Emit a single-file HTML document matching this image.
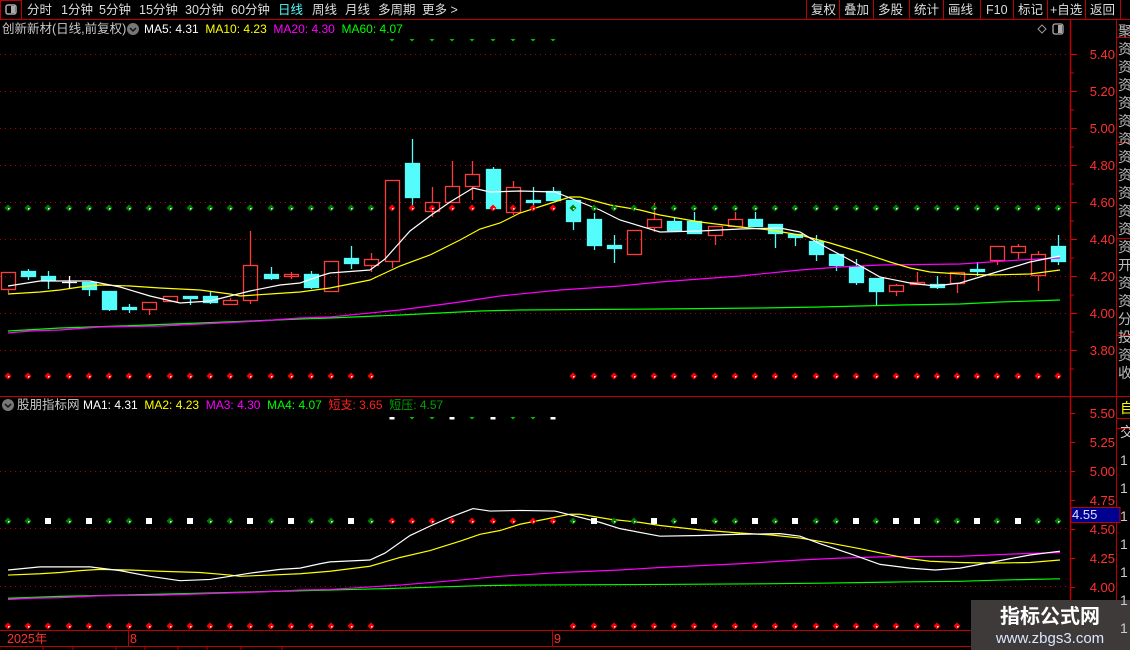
<!DOCTYPE html>
<html><head><meta charset="utf-8">
<style>
html,body{margin:0;padding:0;background:#000;width:1130px;height:650px;overflow:hidden}
body{position:relative;font-family:"Liberation Sans","Noto Sans CJK SC",sans-serif}
.t{position:absolute;white-space:nowrap;font-size:12.5px;line-height:14px}
</style></head><body>
<svg width="1130" height="650" style="position:absolute;left:0;top:0" xmlns="http://www.w3.org/2000/svg">
<defs>
<g id="dg"><path d="M0,-3.5 L3.5,0 L0,3.5 L-3.5,0Z" fill="#008000"/><rect x="0" y="0" width="1.5" height="1.5" fill="#fff"/></g>
<g id="dr"><path d="M0,-3.5 L3.5,0 L0,3.5 L-3.5,0Z" fill="#ff0000"/><rect x="0" y="0" width="1.5" height="1.5" fill="#fff"/></g>
<g id="dw"><rect x="-3" y="-3" width="6" height="6" fill="#fff"/></g>
<g id="tg"><path d="M-2.5,-1 L2.5,-1 L0,1.5Z" fill="#00c000"/></g>
<g id="tw"><rect x="-2.5" y="-1" width="5" height="2.5" fill="#fff"/></g>
<g id="mas" fill="none" stroke-width="1.2">
<polyline vector-effect="non-scaling-stroke" stroke="#00ff00" points="8,331 60,328 120,326 200,323 300,319 330,318 400,315 480,311 520,310 660,309 760,308 820,307 900,305 960,304 1000,302 1060,300"/>
<polyline vector-effect="non-scaling-stroke" stroke="#ff00ff" points="8,333 30,331 60,330 100,327 160,326 200,324 260,321 300,318 330,317 400,310 460,302 500,296 560,290 620,286 660,282 700,279 740,276 800,270 840,267 880,265 960,264 1020,260 1060,258"/>
<polyline vector-effect="non-scaling-stroke" stroke="#ffff00" points="8,294 40,292 60,290 80,287 100,285 130,286 160,288 200,290 230,294 240,296 270,294 300,292 330,288 370,280 400,266 430,255 460,240 480,229 500,223 520,213 545,205 570,197 580,197 610,205 640,210 660,215 700,222 740,227 770,230 800,235 830,243 860,252 890,262 910,268 930,272 960,274 990,275 1030,274 1060,270"/>
<polyline vector-effect="non-scaling-stroke" stroke="#ffffff" points="8,286 40,281 90,281 120,287 150,296 180,303 210,301 230,296 250,291 280,285 300,283 320,276 330,273 370,270 385,259 410,231 430,216 450,202 473,188 490,192 520,191 555,192 575,200 600,210 620,220 660,232 700,231 740,229 780,228 800,232 820,244 850,260 880,277 910,283 935,286 960,283 1000,271 1030,262 1060,256"/>
</g>
</defs>

<!-- frame lines -->
<line x1="0" y1="19.5" x2="1130" y2="19.5" stroke="#c00000"/>
<rect x="0.5" y="0.5" width="21" height="19" fill="none" stroke="#c00000"/>
<rect x="6" y="5" width="10" height="9" rx="2" fill="none" stroke="#aaa" stroke-width="1.5"/><rect x="11" y="6" width="4" height="7" fill="#aaa"/>
<g stroke="#c00000"><line x1="806.5" y1="0" x2="806.5" y2="19"/><line x1="839.5" y1="0" x2="839.5" y2="19"/><line x1="873.5" y1="0" x2="873.5" y2="19"/><line x1="909.5" y1="0" x2="909.5" y2="19"/><line x1="943.5" y1="0" x2="943.5" y2="19"/><line x1="980.5" y1="0" x2="980.5" y2="19"/><line x1="1013.5" y1="0" x2="1013.5" y2="19"/><line x1="1047.5" y1="0" x2="1047.5" y2="19"/><line x1="1085.5" y1="0" x2="1085.5" y2="19"/><line x1="1120.5" y1="0" x2="1120.5" y2="19"/></g>
<line x1="1070.5" y1="20" x2="1070.5" y2="630" stroke="#c00000" stroke-width="1.5"/>
<line x1="1116.5" y1="20" x2="1116.5" y2="630" stroke="#c00000"/>
<line x1="0" y1="396.5" x2="1130" y2="396.5" stroke="#c00000"/>
<line x1="0" y1="630.5" x2="1130" y2="630.5" stroke="#c00000"/>
<line x1="0" y1="646.5" x2="1130" y2="646.5" stroke="#c00000"/>
<line x1="128.5" y1="631" x2="128.5" y2="646" stroke="#c00000"/>
<line x1="552.5" y1="631" x2="552.5" y2="646" stroke="#c00000"/>
<g stroke="#c00000"><line x1="43" y1="647" x2="43" y2="650"/><line x1="73" y1="647" x2="73" y2="650"/><line x1="116" y1="647" x2="116" y2="650"/><line x1="145" y1="647" x2="145" y2="650"/><line x1="178" y1="647" x2="178" y2="650"/><line x1="207" y1="647" x2="207" y2="650"/><line x1="241" y1="647" x2="241" y2="650"/><line x1="282" y1="647" x2="282" y2="650"/></g>
<g stroke="#c00000"><line x1="1117" y1="37.5" x2="1130" y2="37.5"/><line x1="1117" y1="142.5" x2="1130" y2="142.5"/><line x1="1117" y1="238.5" x2="1130" y2="238.5"/><line x1="1117" y1="335.5" x2="1130" y2="335.5"/><line x1="1117" y1="418.5" x2="1130" y2="418.5"/><line x1="1117" y1="428.5" x2="1130" y2="428.5"/></g>

<!-- gridlines -->
<g stroke="#b00000" stroke-dasharray="1,4">
<line x1="0" y1="54.5" x2="1068" y2="54.5"/><line x1="0" y1="91.5" x2="1068" y2="91.5"/><line x1="0" y1="128.5" x2="1068" y2="128.5"/><line x1="0" y1="165.5" x2="1068" y2="165.5"/><line x1="0" y1="202.5" x2="1068" y2="202.5"/><line x1="0" y1="239.5" x2="1068" y2="239.5"/><line x1="0" y1="276.5" x2="1068" y2="276.5"/><line x1="0" y1="313.5" x2="1068" y2="313.5"/><line x1="0" y1="350.5" x2="1068" y2="350.5"/>
<line x1="0" y1="471.5" x2="1068" y2="471.5"/><line x1="0" y1="528.5" x2="1068" y2="528.5"/><line x1="0" y1="586.5" x2="1068" y2="586.5"/>
</g>
<!-- axis ticks -->
<g stroke="#e00000">
<line x1="1071" y1="54.5" x2="1077" y2="54.5"/><line x1="1071" y1="73" x2="1074" y2="73"/><line x1="1071" y1="91.5" x2="1077" y2="91.5"/><line x1="1071" y1="110" x2="1074" y2="110"/><line x1="1071" y1="128.5" x2="1077" y2="128.5"/><line x1="1071" y1="147" x2="1074" y2="147"/><line x1="1071" y1="165.5" x2="1077" y2="165.5"/><line x1="1071" y1="184" x2="1074" y2="184"/><line x1="1071" y1="202.5" x2="1077" y2="202.5"/><line x1="1071" y1="221" x2="1074" y2="221"/><line x1="1071" y1="239.5" x2="1077" y2="239.5"/><line x1="1071" y1="258" x2="1074" y2="258"/><line x1="1071" y1="276.5" x2="1077" y2="276.5"/><line x1="1071" y1="295" x2="1074" y2="295"/><line x1="1071" y1="313.5" x2="1077" y2="313.5"/><line x1="1071" y1="332" x2="1074" y2="332"/><line x1="1071" y1="350.5" x2="1077" y2="350.5"/><line x1="1071" y1="369" x2="1074" y2="369"/>
<line x1="1071" y1="413.5" x2="1075" y2="413.5"/><line x1="1071" y1="442.5" x2="1075" y2="442.5"/><line x1="1071" y1="471.5" x2="1075" y2="471.5"/><line x1="1071" y1="500.5" x2="1075" y2="500.5"/><line x1="1071" y1="529.5" x2="1075" y2="529.5"/><line x1="1071" y1="558.5" x2="1075" y2="558.5"/><line x1="1071" y1="587.5" x2="1075" y2="587.5"/>
</g>
<g fill="#ff3030" font-family="Liberation Sans" font-size="13" text-anchor="end">
<text x="1115" y="59">5.40</text><text x="1115" y="96">5.20</text><text x="1115" y="133">5.00</text><text x="1115" y="170">4.80</text><text x="1115" y="207">4.60</text><text x="1115" y="244">4.40</text><text x="1115" y="281">4.20</text><text x="1115" y="318">4.00</text><text x="1115" y="355">3.80</text>
<text x="1115" y="418">5.50</text><text x="1115" y="447">5.25</text><text x="1115" y="476">5.00</text><text x="1115" y="505">4.75</text><text x="1115" y="534">4.50</text><text x="1115" y="563">4.25</text><text x="1115" y="592">4.00</text>
</g>
<rect x="1071" y="507.5" width="49" height="15" fill="#000090" stroke="#c00000"/>
<text x="1072" y="519" fill="#e0e0ff" font-family="Liberation Sans" font-size="13">4.55</text>

<!-- candles -->
<g id="candles" stroke-width="1.3">
<g stroke="#ff3c3c" fill="none">
<rect x="1.5" y="272.5" width="14" height="17"/><line x1="8.5" y1="289" x2="8.5" y2="293"/>
<rect x="142.5" y="302.5" width="14" height="7"/><line x1="149.5" y1="309" x2="149.5" y2="315"/>
<rect x="163.5" y="296.5" width="14" height="5"/>
<rect x="223.5" y="300.5" width="14" height="4"/><line x1="230.5" y1="298" x2="230.5" y2="300"/>
<rect x="243.5" y="265.5" width="14" height="35"/><line x1="250.5" y1="231" x2="250.5" y2="265"/><line x1="250.5" y1="300" x2="250.5" y2="304"/>
<rect x="284.5" y="274.5" width="14" height="2"/><line x1="291.5" y1="272" x2="291.5" y2="279"/>
<rect x="324.5" y="261.5" width="14" height="30"/>
<rect x="364.5" y="259.5" width="14" height="6"/><line x1="371.5" y1="253" x2="371.5" y2="259"/><line x1="371.5" y1="265" x2="371.5" y2="272"/>
<rect x="385.5" y="180.5" width="14" height="81"/><line x1="392.5" y1="261" x2="392.5" y2="268"/>
<rect x="425.5" y="202.5" width="14" height="9"/><line x1="432.5" y1="187" x2="432.5" y2="202"/><line x1="432.5" y1="211" x2="432.5" y2="217"/>
<rect x="445.5" y="186.5" width="14" height="16"/><line x1="452.5" y1="161" x2="452.5" y2="186"/>
<rect x="465.5" y="174.5" width="14" height="12"/><line x1="472.5" y1="161" x2="472.5" y2="174"/><line x1="472.5" y1="186" x2="472.5" y2="200"/>
<rect x="506.5" y="187.5" width="14" height="25"/><line x1="513.5" y1="181" x2="513.5" y2="187"/><line x1="513.5" y1="212" x2="513.5" y2="215"/>
<rect x="627.5" y="230.5" width="14" height="24"/>
<rect x="647.5" y="219.5" width="14" height="8"/><line x1="654.5" y1="203" x2="654.5" y2="219"/><line x1="654.5" y1="227" x2="654.5" y2="232"/>
<rect x="708.5" y="226.5" width="14" height="9"/><line x1="715.5" y1="235" x2="715.5" y2="245"/>
<rect x="728.5" y="219.5" width="14" height="7"/><line x1="735.5" y1="212" x2="735.5" y2="219"/>
<rect x="889.5" y="285.5" width="14" height="6"/><line x1="896.5" y1="284" x2="896.5" y2="285"/><line x1="896.5" y1="291" x2="896.5" y2="296"/>
<rect x="910.5" y="282.5" width="14" height="2"/><line x1="917.5" y1="272" x2="917.5" y2="282"/>
<rect x="950.5" y="272.5" width="14" height="11"/><line x1="957.5" y1="283" x2="957.5" y2="293"/>
<rect x="990.5" y="246.5" width="14" height="14"/><line x1="997.5" y1="260" x2="997.5" y2="265"/>
<rect x="1011.5" y="246.5" width="14" height="6"/><line x1="1018.5" y1="244" x2="1018.5" y2="246"/><line x1="1018.5" y1="252" x2="1018.5" y2="259"/>
<rect x="1031.5" y="254.5" width="14" height="21"/><line x1="1038.5" y1="251" x2="1038.5" y2="254"/><line x1="1038.5" y1="275" x2="1038.5" y2="291"/>
</g>
<g stroke="#54fcfc" fill="#54fcfc">
<line x1="28.5" y1="269" x2="28.5" y2="280"/><rect x="21.5" y="271.5" width="14" height="5"/>
<line x1="48.5" y1="271" x2="48.5" y2="289"/><rect x="41.5" y="276.5" width="14" height="4"/>
<line x1="89.5" y1="282" x2="89.5" y2="296"/><rect x="82.5" y="282.5" width="14" height="7"/>
<line x1="109.5" y1="291" x2="109.5" y2="311"/><rect x="102.5" y="291.5" width="14" height="18"/>
<line x1="129.5" y1="304" x2="129.5" y2="313"/><rect x="122.5" y="307.5" width="14" height="2"/>
<line x1="190.5" y1="296" x2="190.5" y2="305"/><rect x="183.5" y="296.5" width="14" height="2"/>
<line x1="210.5" y1="291" x2="210.5" y2="304"/><rect x="203.5" y="296.5" width="14" height="6"/>
<line x1="271.5" y1="267" x2="271.5" y2="280"/><rect x="264.5" y="274.5" width="14" height="4"/>
<line x1="311.5" y1="271" x2="311.5" y2="289"/><rect x="304.5" y="274.5" width="14" height="13"/>
<line x1="351.5" y1="246" x2="351.5" y2="269"/><rect x="344.5" y="258.5" width="14" height="5"/>
<line x1="412.5" y1="139" x2="412.5" y2="206"/><rect x="405.5" y="163.5" width="14" height="34"/>
<line x1="493.5" y1="167" x2="493.5" y2="208"/><rect x="486.5" y="169.5" width="14" height="39"/>
<line x1="533.5" y1="187" x2="533.5" y2="210"/><rect x="526.5" y="200.5" width="14" height="2"/>
<line x1="553.5" y1="187" x2="553.5" y2="200"/><rect x="546.5" y="191.5" width="14" height="9"/>
<line x1="573.5" y1="200" x2="573.5" y2="230"/><rect x="566.5" y="200.5" width="14" height="21"/>
<line x1="594.5" y1="213" x2="594.5" y2="250"/><rect x="587.5" y="219.5" width="14" height="26"/>
<line x1="614.5" y1="235" x2="614.5" y2="263"/><rect x="607.5" y="245.5" width="14" height="3"/>
<line x1="674.5" y1="217" x2="674.5" y2="230"/><rect x="667.5" y="221.5" width="14" height="9"/>
<line x1="694.5" y1="212" x2="694.5" y2="233"/><rect x="687.5" y="221.5" width="14" height="12"/>
<line x1="755.5" y1="212" x2="755.5" y2="226"/><rect x="748.5" y="219.5" width="14" height="7"/>
<line x1="775.5" y1="224" x2="775.5" y2="248"/><rect x="768.5" y="224.5" width="14" height="9"/>
<line x1="795.5" y1="234" x2="795.5" y2="246"/><rect x="788.5" y="234.5" width="14" height="3"/>
<line x1="816.5" y1="235" x2="816.5" y2="261"/><rect x="809.5" y="241.5" width="14" height="13"/>
<line x1="836.5" y1="254" x2="836.5" y2="271"/><rect x="829.5" y="254.5" width="14" height="11"/>
<line x1="856.5" y1="259" x2="856.5" y2="285"/><rect x="849.5" y="266.5" width="14" height="16"/>
<line x1="876.5" y1="278" x2="876.5" y2="306"/><rect x="869.5" y="278.5" width="14" height="13"/>
<line x1="937.5" y1="276" x2="937.5" y2="289"/><rect x="930.5" y="284.5" width="14" height="3"/>
<line x1="977.5" y1="262" x2="977.5" y2="276"/><rect x="970.5" y="269.5" width="14" height="2"/>
<line x1="1058.5" y1="235" x2="1058.5" y2="265"/><rect x="1051.5" y="246.5" width="14" height="15"/>
</g>
<g stroke="#ffffff"><line x1="62" y1="282.5" x2="77" y2="282.5"/><line x1="69.5" y1="276" x2="69.5" y2="289"/></g>
</g>

<use href="#mas"/>
<g transform="matrix(1,0,0,0.627,0,390.7)"><use href="#mas"/></g>

<!-- dots main -->
<g>
<use href="#dg" x="8" y="208"/><use href="#dg" x="28" y="208"/><use href="#dg" x="48" y="208"/><use href="#dg" x="69" y="208"/><use href="#dg" x="89" y="208"/><use href="#dg" x="109" y="208"/><use href="#dg" x="129" y="208"/><use href="#dg" x="149" y="208"/><use href="#dg" x="170" y="208"/><use href="#dg" x="190" y="208"/><use href="#dg" x="210" y="208"/><use href="#dg" x="230" y="208"/><use href="#dg" x="250" y="208"/><use href="#dg" x="271" y="208"/><use href="#dg" x="291" y="208"/><use href="#dg" x="311" y="208"/><use href="#dg" x="331" y="208"/><use href="#dg" x="351" y="208"/><use href="#dg" x="371" y="208"/>
<use href="#dr" x="392" y="208"/><use href="#dr" x="412" y="208"/><use href="#dr" x="432" y="208"/><use href="#dr" x="452" y="208"/><use href="#dr" x="472" y="208"/><use href="#dr" x="493" y="208"/><use href="#dr" x="513" y="208"/><use href="#dr" x="533" y="208"/><use href="#dr" x="553" y="208"/>
<use href="#dg" x="573" y="208"/><use href="#dg" x="594" y="208"/><use href="#dg" x="614" y="208"/><use href="#dg" x="634" y="208"/><use href="#dg" x="654" y="208"/><use href="#dg" x="674" y="208"/><use href="#dg" x="694" y="208"/><use href="#dg" x="715" y="208"/><use href="#dg" x="735" y="208"/><use href="#dg" x="755" y="208"/><use href="#dg" x="775" y="208"/><use href="#dg" x="795" y="208"/><use href="#dg" x="816" y="208"/><use href="#dg" x="836" y="208"/><use href="#dg" x="856" y="208"/><use href="#dg" x="876" y="208"/><use href="#dg" x="896" y="208"/><use href="#dg" x="917" y="208"/><use href="#dg" x="937" y="208"/><use href="#dg" x="957" y="208"/><use href="#dg" x="977" y="208"/><use href="#dg" x="997" y="208"/><use href="#dg" x="1018" y="208"/><use href="#dg" x="1038" y="208"/><use href="#dg" x="1058" y="208"/>
</g>
<g>
<use href="#tg" x="392" y="40"/><use href="#tg" x="412" y="40"/><use href="#tg" x="432" y="40"/><use href="#tg" x="452" y="40"/><use href="#tg" x="472" y="40"/><use href="#tg" x="493" y="40"/><use href="#tg" x="513" y="40"/><use href="#tg" x="533" y="40"/><use href="#tg" x="553" y="40"/>
<use href="#tw" x="392" y="418"/><use href="#tg" x="412" y="418"/><use href="#tg" x="432" y="418"/><use href="#tw" x="452" y="418"/><use href="#tg" x="472" y="418"/><use href="#tw" x="493" y="418"/><use href="#tg" x="513" y="418"/><use href="#tg" x="533" y="418"/><use href="#tw" x="553" y="418"/>
</g>
<g id="redrow">
<use href="#dr" x="8" y="376"/><use href="#dr" x="28" y="376"/><use href="#dr" x="48" y="376"/><use href="#dr" x="69" y="376"/><use href="#dr" x="89" y="376"/><use href="#dr" x="109" y="376"/><use href="#dr" x="129" y="376"/><use href="#dr" x="149" y="376"/><use href="#dr" x="170" y="376"/><use href="#dr" x="190" y="376"/><use href="#dr" x="210" y="376"/><use href="#dr" x="230" y="376"/><use href="#dr" x="250" y="376"/><use href="#dr" x="271" y="376"/><use href="#dr" x="291" y="376"/><use href="#dr" x="311" y="376"/><use href="#dr" x="331" y="376"/><use href="#dr" x="351" y="376"/><use href="#dr" x="371" y="376"/>
<use href="#dr" x="573" y="376"/><use href="#dr" x="594" y="376"/><use href="#dr" x="614" y="376"/><use href="#dr" x="634" y="376"/><use href="#dr" x="654" y="376"/><use href="#dr" x="674" y="376"/><use href="#dr" x="694" y="376"/><use href="#dr" x="715" y="376"/><use href="#dr" x="735" y="376"/><use href="#dr" x="755" y="376"/><use href="#dr" x="775" y="376"/><use href="#dr" x="795" y="376"/><use href="#dr" x="816" y="376"/><use href="#dr" x="836" y="376"/><use href="#dr" x="856" y="376"/><use href="#dr" x="876" y="376"/><use href="#dr" x="896" y="376"/><use href="#dr" x="917" y="376"/><use href="#dr" x="937" y="376"/><use href="#dr" x="957" y="376"/><use href="#dr" x="977" y="376"/><use href="#dr" x="997" y="376"/><use href="#dr" x="1018" y="376"/><use href="#dr" x="1038" y="376"/><use href="#dr" x="1058" y="376"/>
</g>
<use href="#redrow" y="250"/>
<!-- lower row -->
<g>
<use href="#dg" x="8" y="521"/><use href="#dg" x="28" y="521"/><use href="#dw" x="48" y="521"/><use href="#dg" x="69" y="521"/><use href="#dw" x="89" y="521"/><use href="#dg" x="109" y="521"/><use href="#dg" x="129" y="521"/><use href="#dw" x="149" y="521"/><use href="#dg" x="170" y="521"/><use href="#dw" x="190" y="521"/><use href="#dg" x="210" y="521"/><use href="#dg" x="230" y="521"/><use href="#dw" x="250" y="521"/><use href="#dg" x="271" y="521"/><use href="#dw" x="291" y="521"/><use href="#dg" x="311" y="521"/><use href="#dg" x="331" y="521"/><use href="#dw" x="351" y="521"/><use href="#dg" x="371" y="521"/>
<use href="#dr" x="392" y="521"/><use href="#dr" x="412" y="521"/><use href="#dr" x="432" y="521"/><use href="#dr" x="452" y="521"/><use href="#dr" x="472" y="521"/><use href="#dr" x="493" y="521"/><use href="#dr" x="513" y="521"/><use href="#dr" x="533" y="521"/><use href="#dr" x="553" y="521"/>
<use href="#dg" x="573" y="521"/><use href="#dw" x="594" y="521"/><use href="#dg" x="614" y="521"/><use href="#dg" x="634" y="521"/><use href="#dw" x="654" y="521"/><use href="#dg" x="674" y="521"/><use href="#dw" x="694" y="521"/><use href="#dg" x="715" y="521"/><use href="#dg" x="735" y="521"/><use href="#dw" x="755" y="521"/><use href="#dg" x="775" y="521"/><use href="#dw" x="795" y="521"/><use href="#dg" x="816" y="521"/><use href="#dg" x="836" y="521"/><use href="#dw" x="856" y="521"/><use href="#dg" x="876" y="521"/><use href="#dw" x="896" y="521"/><use href="#dw" x="917" y="521"/><use href="#dg" x="937" y="521"/><use href="#dg" x="957" y="521"/><use href="#dw" x="977" y="521"/><use href="#dg" x="997" y="521"/><use href="#dw" x="1018" y="521"/><use href="#dg" x="1038" y="521"/><use href="#dg" x="1058" y="521"/>
</g>

<!-- icons -->
<circle cx="133" cy="29" r="6" fill="#777"/><path d="M130,28 L133,31 L136,28" stroke="#111" stroke-width="1.5" fill="none"/>
<circle cx="8" cy="405" r="6" fill="#777"/><path d="M5,404 L8,407 L11,404" stroke="#111" stroke-width="1.5" fill="none"/>
<path d="M1042,25 L1046,29 L1042,33 L1038,29Z" fill="none" stroke="#999"/>
<rect x="1053" y="24" width="10" height="10" rx="2" fill="none" stroke="#aaa" stroke-width="1.3"/><rect x="1058" y="25" width="4" height="8" fill="#aaa"/>

<!-- watermark -->
<rect x="971" y="600" width="159" height="50" fill="#3e3a3a"/>
<text x="1050" y="623" fill="#ffffff" font-family="Liberation Sans,Noto Sans CJK SC,sans-serif" font-size="20" font-weight="bold" text-anchor="middle">指标公式网</text>
<text x="1050" y="643" fill="#dce6ff" font-family="Liberation Sans,sans-serif" font-size="15" text-anchor="middle">www.zbgs3.com</text>
</svg>

<!-- toolbar text -->
<div class="t" style="left:27px;top:3px;color:#ddd">分时</div>
<div class="t" style="left:61px;top:3px;color:#ddd">1分钟</div>
<div class="t" style="left:99px;top:3px;color:#ddd">5分钟</div>
<div class="t" style="left:139px;top:3px;color:#ddd">15分钟</div>
<div class="t" style="left:185px;top:3px;color:#ddd">30分钟</div>
<div class="t" style="left:231px;top:3px;color:#ddd">60分钟</div>
<div class="t" style="left:278px;top:3px;color:#54fcfc">日线</div>
<div class="t" style="left:312px;top:3px;color:#ddd">周线</div>
<div class="t" style="left:345px;top:3px;color:#ddd">月线</div>
<div class="t" style="left:378px;top:3px;color:#ddd">多周期</div>
<div class="t" style="left:422px;top:3px;color:#ddd">更多 &gt;</div>
<div class="t" style="left:811px;top:3px;color:#ddd">复权</div>
<div class="t" style="left:844px;top:3px;color:#ddd">叠加</div>
<div class="t" style="left:878px;top:3px;color:#ddd">多股</div>
<div class="t" style="left:914px;top:3px;color:#ddd">统计</div>
<div class="t" style="left:948px;top:3px;color:#ddd">画线</div>
<div class="t" style="left:986px;top:3px;color:#ddd">F10</div>
<div class="t" style="left:1018px;top:3px;color:#ddd">标记</div>
<div class="t" style="left:1050px;top:3px;color:#ddd">+自选</div>
<div class="t" style="left:1090px;top:3px;color:#ddd">返回</div>

<div class="t" style="left:2px;top:22px;color:#c8c8c8">创新新材(日线,前复权)</div>
<div class="t" style="left:144px;top:22px;font-size:12px"><span style="color:#fff">MA5: 4.31</span>&nbsp;&nbsp;<span style="color:#ffff00">MA10: 4.23</span>&nbsp;&nbsp;<span style="color:#ff00ff">MA20: 4.30</span>&nbsp;&nbsp;<span style="color:#00ff00">MA60: 4.07</span></div>

<div class="t" style="left:17px;top:398px;color:#c8c8c8">股朋指标网</div>
<div class="t" style="left:83px;top:398px;font-size:12px"><span style="color:#fff">MA1: 4.31</span>&nbsp;&nbsp;<span style="color:#ffff00">MA2: 4.23</span>&nbsp;&nbsp;<span style="color:#ff00ff">MA3: 4.30</span>&nbsp;&nbsp;<span style="color:#00ff00">MA4: 4.07</span>&nbsp;&nbsp;<span style="color:#ff2020">短支: 3.65</span>&nbsp;&nbsp;<span style="color:#00a000">短压: 4.57</span></div>

<div class="t" style="left:7px;top:632px;color:#ff3030">2025年</div>
<div class="t" style="left:130px;top:632px;color:#ff3030">8</div>
<div class="t" style="left:554px;top:632px;color:#ff3030">9</div>

<div style="position:absolute;left:1118px;top:22px;width:12px;overflow:hidden;color:#bbb;font-size:14px;line-height:18px;font-family:'Noto Sans CJK SC',sans-serif">聚<br>资<br>资<br>资<br>资<br>资<br>资<br>资<br>资<br>资<br>资<br>资<br>资<br>开<br>资<br>资<br>分<br>投<br>资<br>收</div>
<div style="position:absolute;left:1120px;top:400px;width:10px;overflow:hidden;color:#ffff00;font-size:14px;line-height:16px;font-family:'Noto Sans CJK SC',sans-serif">自</div>
<div style="position:absolute;left:1120px;top:418px;width:10px;overflow:hidden;color:#ccc;font-size:14px;line-height:28px;font-family:'Liberation Sans','Noto Sans CJK SC',sans-serif">交<br>1<br>1<br>1<br>1<br>1<br>1<br>1</div>
</body></html>
